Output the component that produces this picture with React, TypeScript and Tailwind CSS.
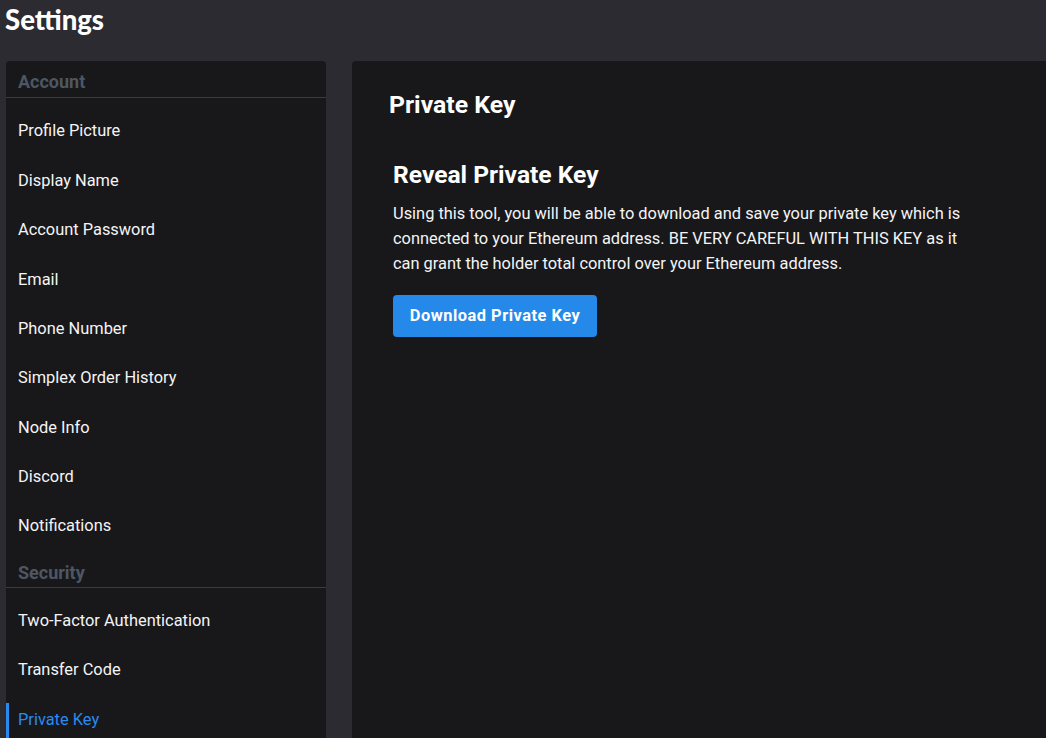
const accountItems = [
  'Profile Picture',
  'Display Name',
  'Account Password',
  'Email',
  'Phone Number',
  'Simplex Order History',
  'Node Info',
  'Discord',
  'Notifications',
];

const securityItems = ['Two-Factor Authentication', 'Transfer Code', 'Private Key'];

const ACTIVE = 'Private Key';

function SectionHeading({ label, first }: { label: string; first?: boolean }) {
  return (
    <div
      className={
        'pl-[12px] border-b border-[#3a3a41] text-[18px] leading-[22px] font-bold text-[#4d5763] ' +
        (first ? 'pt-[10px] pb-[4px]' : 'pt-[11px] pb-[3px]')
      }
    >
      {label}
    </div>
  );
}

function NavItem({ label }: { label: string }) {
  const active = label === ACTIVE;
  return (
    <div
      className={
        'relative h-[49.375px] flex items-center pl-[12px] text-[16.4px] ' +
        (active ? 'text-[#2a8af0]' : 'text-[#f4f4f5]')
      }
    >
      {active && <span className="absolute left-0 top-[8px] bottom-[-8px] w-[3px] bg-[#2a8af0]" />}
      {label}
    </div>
  );
}

export default function App() {
  return (
    <div
      className="w-[1046px] h-[738px] overflow-hidden bg-[#2c2b32] flex flex-col"
      style={{ fontFamily: 'Roboto, "Noto Sans", sans-serif' }}
    >
      {/* top bar */}
      <div className="h-[61px] shrink-0 pl-[5px] pt-[4px]">
        <h1
          className="text-[27.5px] leading-[32px] font-black text-white"
          style={{ fontFamily: 'Lato, Roboto, sans-serif' }}
        >
          Settings
        </h1>
      </div>

      <div className="flex-1 flex gap-[26px] pl-[6px] min-h-0">
        {/* sidebar */}
        <div className="w-[320px] shrink-0 bg-[#18181b] rounded-t-[4px] overflow-hidden">
          <SectionHeading label="Account" first />
          <div className="pt-[9px]">
            {accountItems.map((item) => (
              <NavItem key={item} label={item} />
            ))}
          </div>
          <SectionHeading label="Security" />
          <div className="pt-2">
            {securityItems.map((item) => (
              <NavItem key={item} label={item} />
            ))}
          </div>
        </div>

        {/* main panel */}
        <div className="flex-1 bg-[#18181b] rounded-tl-[4px] pl-[37px] pt-[29px] text-white">
          <h2 className="text-[24.8px] leading-[30px] font-bold">Private Key</h2>
          <div className="pl-[4px] pt-[40px]">
            <h3 className="text-[24.6px] leading-[30px] font-bold">Reveal Private Key</h3>
            <p className="mt-[11px] w-[590px] text-[16.4px] leading-[25px] text-[#f4f4f5]">
              Using this tool, you will be able to download and save your private key which is connected to your
              Ethereum address. BE VERY CAREFUL WITH THIS KEY as it can grant the holder total control over your
              Ethereum address.
            </p>
            <button className="mt-[19px] h-[42px] w-[204px] rounded-[4px] bg-[#2589ea] text-white text-[16.4px] font-bold tracking-[0.5px]">
              Download Private Key
            </button>
          </div>
        </div>
      </div>
    </div>
  );
}
